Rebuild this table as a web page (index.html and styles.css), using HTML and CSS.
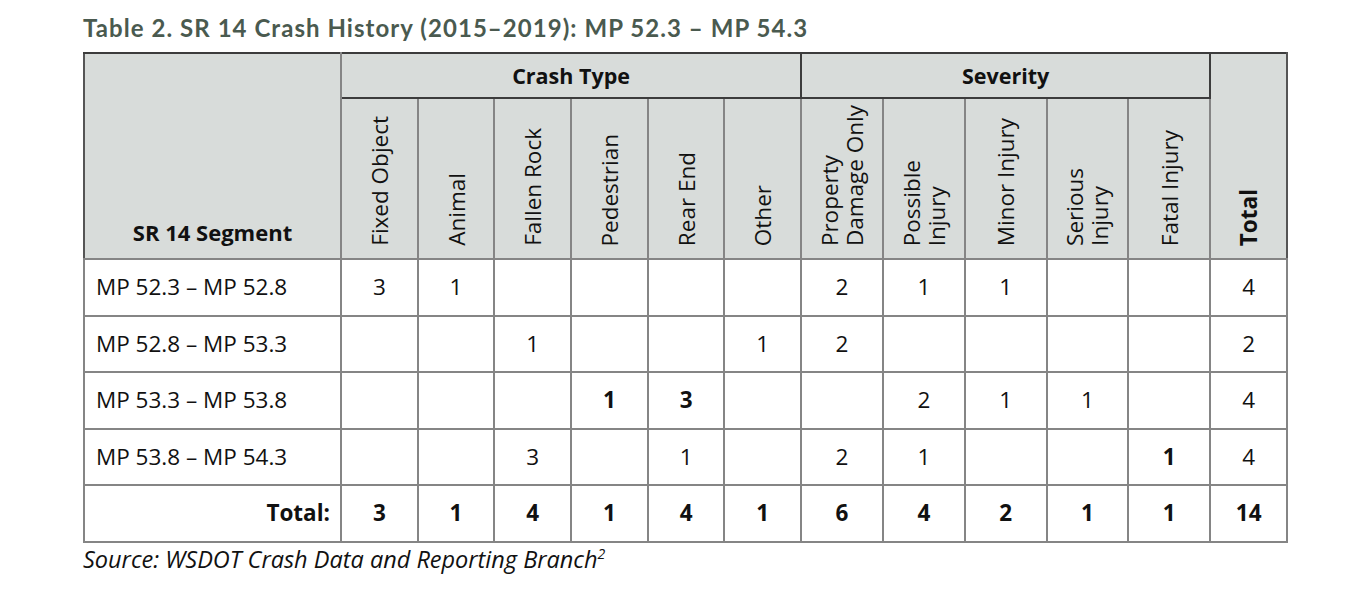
FILE: index.html
```html
<!DOCTYPE html>
<html>
<head>
<meta charset="utf-8">
<link rel="stylesheet" href="styles.css">
</head>
<body>
<div class="page">
  <h1 class="title">Table 2. SR 14 Crash History (2015–2019): MP 52.3 – MP 54.3</h1>
  <table class="crash">
    <colgroup>
      <col class="c-seg">
      <col class="c-ct"><col class="c-ct"><col class="c-ct"><col class="c-ct"><col class="c-ct"><col class="c-ct">
      <col class="c-sv"><col class="c-sv"><col class="c-sv"><col class="c-sv"><col class="c-sv">
      <col class="c-tot">
    </colgroup>
    <thead>
      <tr class="grp">
        <th rowspan="2" class="seg-head">SR 14 Segment</th>
        <th colspan="6" class="grp-head">Crash Type</th>
        <th colspan="5" class="grp-head">Severity</th>
        <th rowspan="2" class="rot-cell tot-head"><span class="rot bold">Total</span></th>
      </tr>
      <tr class="sub">
        <th class="rot-cell"><span class="rot">Fixed Object</span></th>
        <th class="rot-cell"><span class="rot">Animal</span></th>
        <th class="rot-cell"><span class="rot">Fallen Rock</span></th>
        <th class="rot-cell"><span class="rot">Pedestrian</span></th>
        <th class="rot-cell"><span class="rot">Rear End</span></th>
        <th class="rot-cell"><span class="rot">Other</span></th>
        <th class="rot-cell"><span class="rot">Property<br>Damage Only</span></th>
        <th class="rot-cell"><span class="rot">Possible<br>Injury</span></th>
        <th class="rot-cell"><span class="rot">Minor Injury</span></th>
        <th class="rot-cell"><span class="rot">Serious<br>Injury</span></th>
        <th class="rot-cell"><span class="rot">Fatal Injury</span></th>
      </tr>
    </thead>
    <tbody>
      <tr>
        <td class="seg">MP 52.3 – MP 52.8</td>
        <td>3</td><td>1</td><td></td><td></td><td></td><td></td>
        <td>2</td><td>1</td><td>1</td><td></td><td></td>
        <td>4</td>
      </tr>
      <tr>
        <td class="seg">MP 52.8 – MP 53.3</td>
        <td></td><td></td><td>1</td><td></td><td></td><td>1</td>
        <td>2</td><td></td><td></td><td></td><td></td>
        <td>2</td>
      </tr>
      <tr>
        <td class="seg">MP 53.3 – MP 53.8</td>
        <td></td><td></td><td></td><td class="b">1</td><td class="b">3</td><td></td>
        <td></td><td>2</td><td>1</td><td>1</td><td></td>
        <td>4</td>
      </tr>
      <tr>
        <td class="seg">MP 53.8 – MP 54.3</td>
        <td></td><td></td><td>3</td><td></td><td>1</td><td></td>
        <td>2</td><td>1</td><td></td><td></td><td class="b">1</td>
        <td>4</td>
      </tr>
      <tr class="total">
        <td class="seg tot-label">Total:</td>
        <td>3</td><td>1</td><td>4</td><td>1</td><td>4</td><td>1</td>
        <td>6</td><td>4</td><td>2</td><td>1</td><td>1</td>
        <td>14</td>
      </tr>
    </tbody>
  </table>
  <p class="source">Source: WSDOT Crash Data and Reporting Branch<sup>2</sup></p>
</div>
</body>
</html>
```

FILE: styles.css
```css
html, body {
  margin: 0;
  padding: 0;
  background: #ffffff;
}

.page {
  padding: 13px 0 0 83px;
  font-family: "Open Sans", "Noto Sans", sans-serif;
  color: #111111;
}

.title {
  margin: 0 0 10px 0;
  font-family: "Lato", "DejaVu Sans", sans-serif;
  font-weight: 700;
  font-size: 24px;
  line-height: 29px;
  color: #4a5a4f;
  letter-spacing: 1.05px;
  white-space: nowrap;
}

.crash {
  border-collapse: collapse;
  table-layout: fixed;
  width: 1204px;
  font-size: 22.5px;
}

.c-seg { width: 257px; }
.c-ct { width: 76.7px; }
.c-sv { width: 81.8px; }
.c-tot { width: 77px; }

.crash th,
.crash td {
  border: 2px solid #858585;
  padding: 0;
}

.crash thead th {
  background: #d8dcda;
  color: #111111;
}

.crash thead tr.grp th {
  border-top-color: #3c3c3c;
}

.grp {
  height: 45px;
}

.grp-head {
  font-weight: 700;
  font-size: 21.5px;
  text-align: center;
  vertical-align: middle;
  border-bottom-color: #3c3c3c !important;
  border-left-color: #3c3c3c !important;
  border-right-color: #3c3c3c !important;
}

.sub {
  height: 161px;
}

.seg-head {
  font-weight: 700;
  font-size: 22px;
  text-align: center;
  vertical-align: bottom;
  padding-bottom: 12px !important;
  line-height: 28px;
  border-left-color: #555555 !important;
}

.rot-cell {
  vertical-align: bottom;
  text-align: center;
  padding-bottom: 5px !important;
  font-weight: 400;
}

.tot-head {
  border-right-color: #555555 !important;
}

.rot {
  display: inline-block;
  writing-mode: vertical-rl;
  transform: rotate(180deg);
  text-align: left;
  line-height: 25px;
  font-weight: 400;
  white-space: nowrap;
}

.rot.bold {
  font-weight: 700;
}

.crash tbody tr {
  height: 56.5px;
}

.crash tbody td {
  text-align: center;
  vertical-align: middle;
  line-height: 28px;
}

.crash tbody td.seg {
  text-align: left;
  padding-left: 11px;
}

.crash td.b {
  font-weight: 700;
}

.crash tr.total td {
  font-weight: 700;
}

.crash tr.total td.tot-label {
  text-align: right;
  padding-left: 0;
  padding-right: 10px;
}

.source {
  margin: 1px 0 0 0;
  font-style: italic;
  font-size: 23.5px;
  line-height: 30px;
  color: #111111;
}

.source sup {
  font-size: 14px;
  line-height: 0;
  vertical-align: 9px;
}
```
